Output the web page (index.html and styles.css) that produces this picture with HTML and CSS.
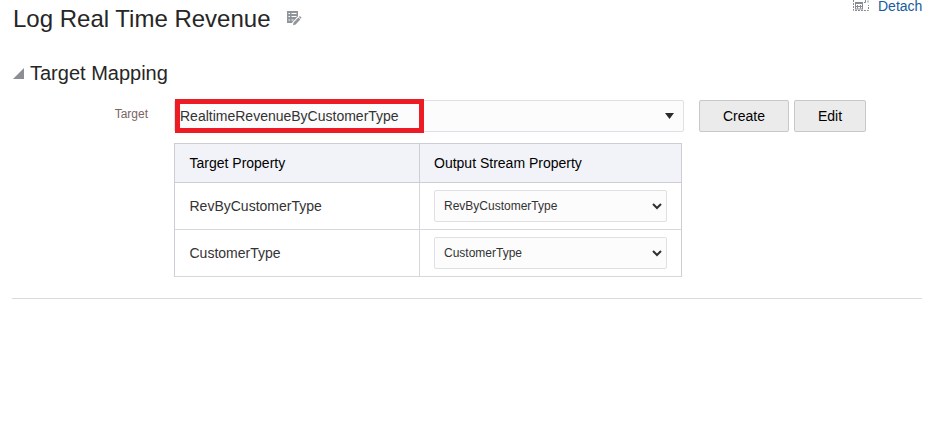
FILE: index.html
```html
<!DOCTYPE html>
<html lang="en">
<head>
<meta charset="utf-8">
<title>Log Real Time Revenue</title>
<link rel="stylesheet" href="styles.css">
</head>
<body>
<header class="page-header">
  <h1 class="title">Log Real Time Revenue</h1>
  <svg class="edit-icon" width="16" height="16" viewBox="0 0 16 16">
    <path fill="#90959a" d="M0 1h11v6L6.500 11.500V13H0z"/>
    <path stroke="#fff" stroke-width="1" d="M1.500 3.500H3M4.500 3.500H9.500M1.500 6.500H3M4.500 6.500H9.500M1.500 10H3M4.500 10H6.500"/>
    <path stroke="#fff" stroke-width="4" d="M6 14.500L13 7"/>
    <path fill="#90959a" d="M6 15.200l.6-2.600 4.800-5 1.900 1.900-4.700 5zM11.900 7l1-1 1.700 1.700-1 1z"/>
  </svg>
  <a class="detach">
    <svg class="detach-icon" width="17" height="12" viewBox="0 0 17 12" fill="none">
      <path stroke="#878c91" stroke-dasharray="2 1" d="M.5 0v10.500h15V5"/>
      <path fill="#878c91" d="M2 2h8v7.500H2z"/>
      <path fill="#fff" d="M3 4h6v4.500H3z"/>
      <path stroke="#878c91" d="M3 6.500h6M4.500 5v3.500M7.500 5v3.500"/>
      <path stroke="#878c91" d="M11 2.500h1.500V0M15 .5v2"/>
    </svg>
    <span class="detach-label">Detach</span>
  </a>
</header>
<main class="section">
  <div class="section-head">
    <svg class="disclosure" width="11" height="11" viewBox="0 0 11 11"><path fill="#8b8f94" d="M11 0v11H0z"/></svg>
    <h2 class="section-title">Target Mapping</h2>
  </div>
  <div class="form-row">
    <label class="label">Target</label>
    <div class="combo">
      <span class="combo-value">RealtimeRevenueByCustomerType</span>
      <svg class="arrow" width="9" height="6" viewBox="0 0 9 6"><path fill="#2b2b2b" d="M0 0h9L4.500 6z"/></svg>
      <div class="highlight"></div>
    </div>
    <button class="button create">Create</button>
    <button class="button edit">Edit</button>
  </div>
  <div class="mapping">
    <div class="cell head">Target Property</div>
    <div class="cell head">Output Stream Property</div>
    <div class="cell">RevByCustomerType</div>
    <div class="cell"><div class="select"><span class="select-value">RevByCustomerType</span><svg class="chevron" width="10" height="7" viewBox="0 0 10 7"><path fill="none" stroke="#303030" stroke-width="2" d="M1 1l4 4 4-4"/></svg></div></div>
    <div class="cell">CustomerType</div>
    <div class="cell"><div class="select"><span class="select-value">CustomerType</span><svg class="chevron" width="10" height="7" viewBox="0 0 10 7"><path fill="none" stroke="#303030" stroke-width="2" d="M1 1l4 4 4-4"/></svg></div></div>
  </div>
</main>
</body>
</html>
```
FILE: styles.css
```css
* { box-sizing: border-box; }
body {
  margin: 0;
  height: 436px;
  overflow: hidden;
  background: #fff;
  color: #333;
  font: 14px/18px "Liberation Sans", Arial, sans-serif;
}
.page-header {
  display: flex;
  align-items: flex-start;
  height: 56px;
  padding: 0 5px 0 13px;
}
.title, .section-title { margin: 0; font-weight: 400; color: #262626; white-space: nowrap; }
.title { width: 258px; padding-top: 5px; font-size: 24px; line-height: 28px; }
.edit-icon { margin: 10px 0 0 16px; }
.detach { display: flex; margin-left: auto; color: #145c9e; }
.detach-label { width: 44px; margin-left: 8px; line-height: 12px; white-space: nowrap; }
.section { height: 243px; margin: 0 5px 0 12px; border-bottom: 1px solid #d6dbe0; }
.section-head { display: flex; height: 44px; padding: 5px 0 0 1px; }
.disclosure { margin: 7px 6px 0 0; }
.section-title { font-size: 20px; line-height: 24px; }
.form-row { display: flex; height: 43px; }
.label { width: 136px; margin-right: 26px; padding-top: 5px; text-align: right; font-size: 12px; color: #7a6464; }
.combo {
  position: relative;
  display: flex;
  align-items: center;
  justify-content: space-between;
  width: 510px;
  height: 32px;
  padding: 0 9px 0 5px;
  border: 1px solid #dfe0e2;
  border-radius: 2px;
  background: #fcfcfc;
}
.highlight { position: absolute; left: 0; top: -2px; width: 249px; height: 34px; border: 5px solid #ed1c24; }
.button {
  height: 32px;
  padding: 0;
  border: 1px solid #c6c8ca;
  border-radius: 2px;
  background: #ebebeb;
  color: #000;
  font: inherit;
}
.create { width: 90px; margin-left: 15px; }
.edit { width: 72px; margin-left: 5px; }
.mapping {
  display: grid;
  grid-template-columns: 245px 262px;
  grid-template-rows: 39px 47px 47px;
  width: 508px;
  margin-left: 162px;
  border: solid #cdced3;
  border-width: 1px 0 0 1px;
}
.cell { display: flex; align-items: center; padding: 0 14px 0 14.500px; border: solid #d6d8db; border-width: 0 1px 1px 0; }
.cell:nth-child(even) { padding-left: 14px; border-right-color: #cdced3; }
.head { background: #f2f3f8; border-color: #cdced3; color: #000; }
.select {
  display: flex;
  align-items: center;
  justify-content: space-between;
  width: 233px;
  height: 32px;
  padding: 0 4px 0 9px;
  border: 1px solid #dfe0e2;
  border-radius: 2px;
  background: #fcfcfc;
  font-size: 12px;
}
```
